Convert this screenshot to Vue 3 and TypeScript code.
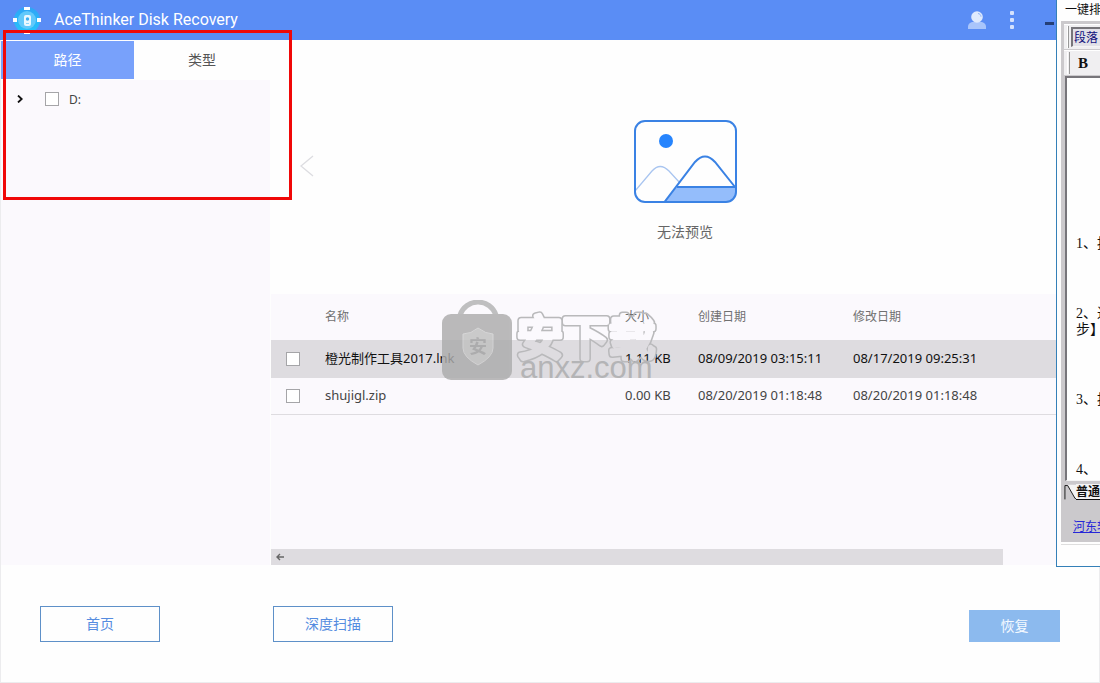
<script setup lang="ts">
import { ref } from 'vue'

interface FileRow {
  name: string
  size: string
  created: string
  modified: string
}

const tabs: string[] = ['路径', '类型']
const activeTab = ref(0)
const selectedRow = ref(0)
const files: FileRow[] = [
  { name: '橙光制作工具2017.lnk', size: '1.11 KB', created: '08/09/2019 03:15:11', modified: '08/17/2019 09:25:31' },
  { name: 'shujigl.zip', size: '0.00 KB', created: '08/20/2019 01:18:48', modified: '08/20/2019 01:18:48' },
]
const steps: string[][] = [['1、按'], ['2、进', '步】'], ['3、按'], ['4、']]
</script>

<template>
  <div class="app">
    <header class="titlebar">
      <svg class="logo" viewBox="0 0 28 28" aria-hidden="true">
        <defs>
          <linearGradient id="logoFill" x1="0" y1="0" x2="0" y2="1">
            <stop offset="0" stop-color="#2fa4f6" />
            <stop offset="1" stop-color="#25c4fb" />
          </linearGradient>
        </defs>
        <circle cx="14" cy="14" r="13" fill="url(#logoFill)" />
        <circle cx="14" cy="14" r="9" fill="#62c9fb" />
        <rect x="11" y="1" width="6" height="3" fill="#fff" />
        <rect x="11" y="25" width="6" height="3" fill="#fff" />
        <rect x="0" y="12" width="4" height="4" fill="#fff" />
        <rect x="24" y="12" width="4" height="4" fill="#fff" />
        <rect x="11" y="9" width="7" height="11" rx="2" fill="#e9f8ff" />
        <circle cx="14.500" cy="13" r="1.700" fill="#3fb0f3" />
        <path d="M13 17.500h3" stroke="#8ed6fa" stroke-width="1" />
      </svg>
      <h1 class="title">AceThinker Disk Recovery</h1>
      <button class="bar-btn user" aria-label="account">
        <svg viewBox="0 0 18 18" width="18" height="18">
          <path d="M0 18v-2c0-3.200 2.500-5 5.500-5h7c3 0 5.500 1.800 5.500 5v2z" fill="#a9c5fb" />
          <circle cx="9" cy="6" r="5.800" fill="#dfeafd" />
          <path d="M10 2.500c1.800.2 2.800 1.400 3 3.200" fill="none" stroke="#8fb2f7" stroke-width="1" />
        </svg>
      </button>
      <button class="bar-btn more" aria-label="menu">
        <svg viewBox="0 0 4 18" width="4" height="18">
          <rect width="4" height="4" rx="1" fill="#d5e2fd" />
          <rect y="7" width="4" height="4" rx="1" fill="#d5e2fd" />
          <rect y="14" width="4" height="4" rx="1" fill="#d5e2fd" />
        </svg>
      </button>
      <button class="bar-btn" aria-label="minimize">
        <svg viewBox="0 0 9 10" width="9" height="10"><rect y="7" width="9" height="3" fill="#243f77" /></svg>
      </button>
    </header>

    <div class="frame">
      <main class="body">
        <aside class="sidebar">
          <div class="tabs" role="tablist">
            <button
              v-for="(tab, i) in tabs"
              :key="tab"
              class="tab"
              :class="{ active: activeTab === i }"
              role="tab"
              :aria-selected="activeTab === i"
              @click="activeTab = i"
            >{{ tab }}</button>
          </div>
          <div class="tree">
            <div class="node">
              <button class="expander" aria-label="expand">
                <svg viewBox="0 0 6 8" width="6" height="8">
                  <path d="M1 .5 4.700 4 1 7.500" fill="none" stroke="#111" stroke-width="1.800" />
                </svg>
              </button>
              <input id="drive-d" class="check" type="checkbox" />
              <label for="drive-d">D:</label>
            </div>
          </div>
        </aside>

        <section class="content">
          <div class="preview">
            <button class="prev" aria-label="previous">
              <svg viewBox="0 0 14 22" width="14" height="22">
                <path d="M13 1 1 11l12 10" fill="none" stroke="#dddde1" stroke-width="1.300" />
              </svg>
            </button>
            <div class="placeholder">
              <svg viewBox="0 0 103 84" width="103" height="84" aria-hidden="true">
                <defs>
                  <clipPath id="frameClip"><rect x="1" y="1" width="101" height="81" rx="10" /></clipPath>
                </defs>
                <g clip-path="url(#frameClip)" fill="none">
                  <path d="M1 71 18 51q8-9 17 0l11 12" stroke="#a9c5f0" stroke-width="1.300" />
                  <path d="M43 67h60v16H29z" fill="#94bdfb" />
                  <path d="M29 84 61 42q10-11 20 0l20 25M43 67h60" stroke="#3a82e4" stroke-width="2" />
                </g>
                <circle cx="32" cy="21" r="7" fill="#2684fd" />
                <rect x="1" y="1" width="101" height="81" rx="10" fill="none" stroke="#3a82e4" stroke-width="2" />
              </svg>
              <p>无法预览</p>
            </div>
          </div>

          <div class="listing">
            <table class="files">
              <colgroup>
                <col class="c-check" /><col class="c-name" /><col class="c-size" /><col class="c-date" /><col />
              </colgroup>
              <thead>
                <tr><th></th><th>名称</th><th>大小</th><th>创建日期</th><th>修改日期</th></tr>
              </thead>
              <tbody>
                <tr v-for="(f, i) in files" :key="f.name" :class="{ selected: selectedRow === i }" @click="selectedRow = i">
                  <td class="pick"><input class="check" type="checkbox" :aria-label="f.name" /></td>
                  <td>{{ f.name }}</td>
                  <td>{{ f.size }}</td>
                  <td>{{ f.created }}</td>
                  <td>{{ f.modified }}</td>
                </tr>
              </tbody>
            </table>
            <svg class="watermark" viewBox="0 0 220 84" width="220" height="84">
              <mask id="hollow" maskUnits="userSpaceOnUse" x="0" y="0" width="220" height="84">
                <rect width="220" height="84" fill="#fff" />
                <text x="75" y="54" class="brand inner">安下载</text>
              </mask>
              <g opacity=".82">
                <path d="M18 15a19 19 0 0 1 36 0" fill="none" stroke="#b3b3b3" stroke-width="5" />
                <rect x="0" y="14" width="70" height="66" rx="9" fill="#acacac" />
                <path d="M36 28q8 6 15 6v14q0 9-15 17-15-8-15-17V34q8 0 15-6z" fill="#c0c0c0" stroke="#d0d0d0" stroke-width="1" />
                <text x="36" y="53" class="badge">安</text>
              </g>
              <text x="75" y="54" class="brand outer" mask="url(#hollow)">安下载</text>
              <text x="78" y="78" class="site">anxz.com</text>
            </svg>
            <div class="scrollbar">
              <button aria-label="scroll left">
                <svg viewBox="0 0 8 8" width="8" height="8">
                  <path d="M8 4H1M4 1 1 4l3 3" fill="none" stroke="#666" stroke-width="1.400" />
                </svg>
              </button>
            </div>
          </div>
        </section>
      </main>

      <footer class="actions">
        <button class="ghost">首页</button>
        <button class="ghost deep">深度扫描</button>
        <button class="recover">恢复</button>
      </footer>
    </div>

    <div class="highlight"></div>

    <aside class="editor-window">
      <div class="editor-title">一键排版</div>
      <div class="editor-panel">
        <div class="tool-row">
          <i class="grip"></i>
          <select class="style-select" aria-label="style"><option>段落</option></select>
        </div>
        <div class="tool-row">
          <i class="grip"></i>
          <button class="bold">B</button>
        </div>
        <div class="paper">
          <div v-for="(step, i) in steps" :key="i" class="step">
            <p v-for="line in step" :key="line">{{ line }}</p>
          </div>
        </div>
        <div class="sheet-tabs">
          <svg viewBox="0 0 13 16" width="13" height="16" aria-hidden="true">
            <path d="M4 0h9v15h-1z" fill="#f4f4f4" />
            <path d="M1 16V1h3l8 14h1" fill="none" stroke="#111" stroke-width="1" />
          </svg>
          <button class="sheet">普通</button>
        </div>
        <a class="site-link" href="#">河东软件园</a>
      </div>
      <div class="editor-edge"></div>
    </aside>
  </div>
</template>

<style>
html,
body {
  margin: 0;
  background: #fefefe;
}
</style>

<style scoped>
.app {
  position: relative;
  display: flex;
  flex-direction: column;
  min-height: 100vh;
  overflow: hidden;
  background: #fefefe;
  color: #444;
  font-family: "Noto Sans", "Noto Sans CJK SC", sans-serif;
  font-size: 13px;
}
.app * {
  box-sizing: border-box;
}
button {
  margin: 0;
  padding: 0;
  border: 0;
  background: none;
  color: inherit;
  font: inherit;
}
svg {
  display: block;
}
p {
  margin: 0;
}

.titlebar {
  display: flex;
  align-items: center;
  height: 40px;
  padding: 0 46px 0 13px;
  background: #5a8df5;
}
.logo {
  width: 28px;
  height: 28px;
}
.title {
  flex: 1;
  margin: 0 0 0 13px;
  color: #fff;
  font: 400 16px/20px Roboto, sans-serif;
}
.user {
  margin-right: 24px;
}
.more {
  margin-right: 31px;
}

.frame {
  flex: 1;
  display: flex;
  flex-direction: column;
  border: 1px solid #ececee;
  border-top: 0;
}
.body {
  flex: 1;
  display: grid;
  grid-template-columns: 269px 1fr;
  column-gap: 1px;
}
.sidebar {
  display: flex;
  flex-direction: column;
  padding-top: 1px;
}
.tabs {
  display: grid;
  grid-template-columns: 133px 1fr;
  height: 39px;
  padding-bottom: 1px;
}
.tab {
  padding-bottom: 2px;
  color: #555;
  font-size: 14px;
}
.tab.active {
  background: #78a1fb;
  color: #fff;
}
.tree {
  flex: 1;
  padding: 9px 16px;
  background: #fbf9fd;
}
.node {
  display: flex;
  align-items: center;
  height: 20px;
  font-size: 12px;
}
.expander {
  margin-right: 22px;
}
.node label {
  margin-left: 10px;
}
.check {
  appearance: none;
  display: block;
  width: 14px;
  height: 14px;
  margin: 0;
  border: 1px solid #a5a5a8;
  background: #fff;
}
.check:checked {
  background: #5a8df5;
}

.content {
  display: flex;
  flex-direction: column;
  min-width: 0;
}
.preview {
  display: grid;
  grid-template-columns: 72px 1fr 72px;
  height: 254px;
}
.prev {
  align-self: center;
  margin-left: 29px;
  padding-bottom: 2px;
  justify-self: start;
}
.placeholder {
  display: flex;
  flex-direction: column;
  align-items: center;
  gap: 18px;
  padding-top: 80px;
  color: #666;
  font-size: 14px;
  line-height: 20px;
}

.listing {
  position: relative;
  flex: 1;
  display: flex;
  flex-direction: column;
  justify-content: space-between;
  background: #fbf9fd;
}
.files {
  width: 100%;
  table-layout: fixed;
  border-collapse: separate;
  border-spacing: 0;
}
.c-check {
  width: 54px;
}
.c-name {
  width: 300px;
}
.c-size {
  width: 73px;
}
.c-date {
  width: 155px;
}
th,
td {
  padding: 0 0 2px;
  text-align: left;
  white-space: nowrap;
}
th {
  height: 46px;
  color: #707070;
  font-size: 12px;
  font-weight: 400;
}
td {
  height: 37px;
  border-bottom: 1px solid #dedce0;
  line-height: 20px;
}
.selected td {
  height: 38px;
  background: #dedce0;
  color: #111;
}
.pick {
  padding: 0 0 0 15px;
}
.watermark {
  position: absolute;
  left: 171px;
  top: 6px;
  pointer-events: none;
}
.brand {
  font: 400 46px "Noto Sans CJK SC", sans-serif;
  fill: none;
  stroke-linejoin: round;
}
.outer {
  stroke: #b9b9bb;
  stroke-width: 8px;
}
.inner {
  fill: #000;
  stroke: #000;
  stroke-width: 5px;
}
.badge {
  fill: #a2a2a2;
  font: 700 18px "Noto Sans CJK SC", sans-serif;
  text-anchor: middle;
}
.site {
  fill: #b4b4b6;
  font: 400 31px "Liberation Sans", Arial, sans-serif;
}
.scrollbar {
  display: flex;
  align-items: center;
  height: 16px;
  margin-right: 96px;
  padding-left: 5px;
  background: #dedce0;
}

.actions {
  display: flex;
  align-items: flex-end;
  height: 117px;
  padding: 0 39px 40px;
  font-size: 14px;
}
.ghost,
.recover {
  padding-bottom: 2px;
}
.ghost {
  width: 120px;
  height: 36px;
  border: 1px solid #5e90c8;
  color: #558ce0;
}
.deep {
  margin-left: 113px;
}
.recover {
  width: 91px;
  height: 32px;
  margin-left: auto;
  background: #8cbaee;
  color: #f4f9ff;
}

.highlight {
  position: absolute;
  left: 3px;
  top: 30px;
  width: 289px;
  height: 170px;
  border: 3px solid #f00808;
  pointer-events: none;
}

.editor-window {
  position: absolute;
  top: 0;
  right: 0;
  width: 44px;
  height: 567px;
  padding-left: 4px;
  overflow: hidden;
  border-left: 1px solid #3480b8;
  border-bottom: 1px solid #3480b8;
  background: #fefefe;
  color: #111;
  font-family: "Liberation Serif", "Noto Sans CJK SC", serif;
  font-size: 12px;
  white-space: nowrap;
}
.editor-title {
  height: 21px;
  padding-left: 4px;
  line-height: 21px;
}
.editor-panel {
  height: 521px;
  padding: 3px 0 0 3px;
  background: #cbc9cc;
}
.editor-edge {
  height: 3px;
  border-bottom: 1px solid #dedede;
}
.tool-row {
  display: flex;
  align-items: center;
  height: 25px;
  margin-bottom: 1px;
  padding-left: 3px;
  border-top: 1px solid #fff;
  background: #f0eff1;
}
.grip {
  width: 3px;
  height: 22px;
  border-right: 1px solid #999;
  border-left: 1px solid #fff;
}
.style-select {
  appearance: none;
  flex: none;
  width: 60px;
  height: 20px;
  margin-left: 2px;
  padding: 0 0 0 1px;
  border: 2px solid #77757a;
  border-bottom: 1px solid #f4f4f4;
  border-radius: 0;
  background: #e2e1e8;
  color: #10107c;
  font: inherit;
}
.bold {
  margin-left: 8px;
  font-size: 15px;
  font-weight: 700;
}
.paper {
  display: flex;
  flex-direction: column;
  gap: 54px;
  height: 405px;
  margin-left: 1px;
  padding: 158px 0 0 9px;
  border-top: 2px solid #77757a;
  border-left: 2px solid #77757a;
  border-bottom: 1px solid #f6f6f6;
  background: #fefefe;
  font-size: 14px;
  line-height: 16px;
}
.sheet-tabs {
  display: flex;
  height: 17px;
  margin-top: 3px;
}
.sheet {
  height: 16px;
  background: #f4f4f4;
  border-bottom: 1px solid #111;
  font-size: 12px;
  font-weight: 700;
  line-height: 16px;
}
.site-link {
  display: block;
  margin: 17px 0 0 9px;
  color: #2626d8;
  line-height: 18px;
}
</style>
